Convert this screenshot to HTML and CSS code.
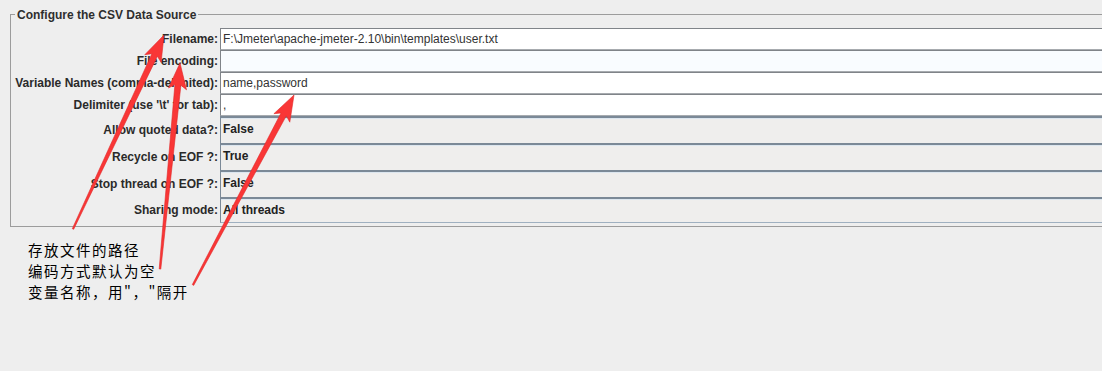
FILE: index.html
```html
<!DOCTYPE html>
<html lang="zh-CN">
<head>
  <meta charset="UTF-8">
  <title>CSV Data Set Config</title>
  <link rel="stylesheet" href="styles.css">
</head>
<body>

  <fieldset class="csv-box">
    <legend>Configure the CSV Data Source</legend>
    <div class="form-grid">
      <label>Filename:</label>
      <div class="field">F:\Jmeter\apache-jmeter-2.10\bin\templates\user.txt</div>

      <label>File encoding:</label>
      <div class="field field-focus"></div>

      <label>Variable Names (comma-delimited):</label>
      <div class="field">name,password</div>

      <label>Delimiter (use '\t' for tab):</label>
      <div class="field">,</div>

      <label>Allow quoted data?:</label>
      <div class="combo">False</div>

      <label>Recycle on EOF ?:</label>
      <div class="combo">True</div>

      <label>Stop thread on EOF ?:</label>
      <div class="combo">False</div>

      <label>Sharing mode:</label>
      <div class="combo combo-last">All threads</div>
    </div>
  </fieldset>

  <div class="note">
    <div>存放文件的路径</div>
    <div>编码方式默认为空</div>
    <div>变量名称，用"，"隔开</div>
  </div>

  <!-- red annotation arrows drawn over the form -->
  <svg class="arrows" width="1102" height="371" viewBox="0 0 1102 371">
    <polygon points="73.7,229.3 157.4,56.2 161.1,62.4 164,35 144.8,54.7 151.9,53.7 72.3,228.7"/>
    <polygon points="160.8,269.1 180.9,85.2 186.5,89.8 180,63 168.5,88.0 174.9,84.6 159.2,268.9"/>
    <polygon points="193.7,285.4 286.3,115.8 289.8,122.2 294,95 273.9,113.7 281.0,113.0 192.3,284.6"/>
  </svg>

</body>
</html>
```

FILE: styles.css
```css
html, body {
  overflow: hidden;
}

body {
  margin: 0;
  width: 1102px;
  height: 371px;
  position: relative;
  background-color: #eeeeee;
  font-family: "Liberation Sans", Arial, sans-serif;
  font-size: 12px;
  color: #333;
}

.csv-box {
  width: 1150px;
  margin: 7px 0 0 10px;
  padding: 6px 0 3px 0;
  border: 1px solid #9c9c9c;
  box-sizing: border-box;
  min-width: 0;
}

.csv-box legend {
  font-weight: bold;
  line-height: 14px;
  padding: 1px 2px 0;
  margin-left: 4px;
  color: #2e2e2e;
}

.form-grid {
  display: grid;
  grid-template-columns: 207px 1fr;
  grid-template-rows: 22px 22px 22px 22px 27px 27px 27px 26px;
  column-gap: 2px;
}

.form-grid label {
  font-weight: bold;
  text-align: right;
  display: flex;
  align-items: center;
  justify-content: flex-end;
  color: #2a2a2a;
}

.field {
  box-sizing: border-box;
  background-color: #fff;
  border-top: 1px solid #808489;
  border-left: 1px solid #808489;
  border-bottom: 1px solid #a7abaf;
  padding-left: 2px;
  line-height: 20px;
  color: #333;
  white-space: nowrap;
}

.field-focus {
  background-color: #f9fcff;
}

.combo {
  box-sizing: border-box;
  background-color: #efeeed;
  border-top: 2px solid #7b8997;
  border-left: 1px solid #7b8997;
  box-shadow: inset 0 1px 0 #dce6ef;
  padding: 0 0 3px 2px;
  font-weight: bold;
  color: #222;
  display: flex;
  align-items: center;
}

.combo-last {
  border-bottom: 1px solid #9fb0c0;
  padding-bottom: 2px;
}

.note {
  margin: 12px 0 0 28px;
  font-family: "Noto Sans CJK SC", sans-serif;
  font-size: 14.5px;
  letter-spacing: 1.5px;
  line-height: 21px;
  color: #000;
}

.arrows {
  position: absolute;
  left: 0;
  top: 0;
  pointer-events: none;
}

.arrows polygon {
  fill: #f93636;
  stroke: #e02828;
  stroke-width: 0.6;
  stroke-linejoin: round;
}
```
